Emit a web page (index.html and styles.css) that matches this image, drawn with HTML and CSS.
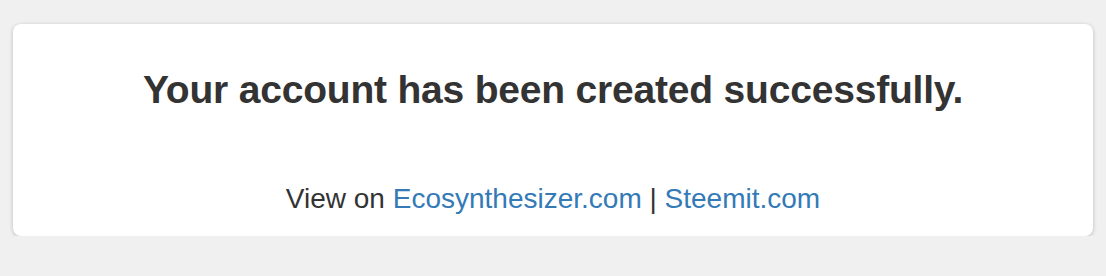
FILE: index.html
```html
<!DOCTYPE html>
<html>
<head>
<meta charset="utf-8">
<link rel="stylesheet" href="styles.css">
</head>
<body>
<div class="card">
  <h1 class="title">Your account has been created successfully.</h1>
  <p class="links">View on <a href="#">Ecosynthesizer.com</a> | <a href="#">Steemit.com</a></p>
</div>
</body>
</html>
```
FILE: styles.css
```css
html, body {
  margin: 0;
  padding: 0;
  background: #f0f0f0;
  font-family: "Liberation Sans", Arial, sans-serif;
  color: #333;
}
body {
  padding: 24px 13px 0 13px;
}
.card {
  background: #fff;
  border-radius: 8px;
  box-shadow: 0 1px 4px rgba(0, 0, 0, 0.22);
  height: 212px;
  box-sizing: border-box;
  display: flex;
  flex-direction: column;
  align-items: center;
  padding-top: 44px;
}
.title {
  margin: 0;
  font-size: 39px;
  letter-spacing: -0.2px;
  font-weight: bold;
  line-height: 44px;
}
.links {
  margin: 71px 0 0 0;
  font-size: 28px;
  line-height: 32px;
}
.links a {
  color: #337ab7;
  text-decoration: none;
}
```
